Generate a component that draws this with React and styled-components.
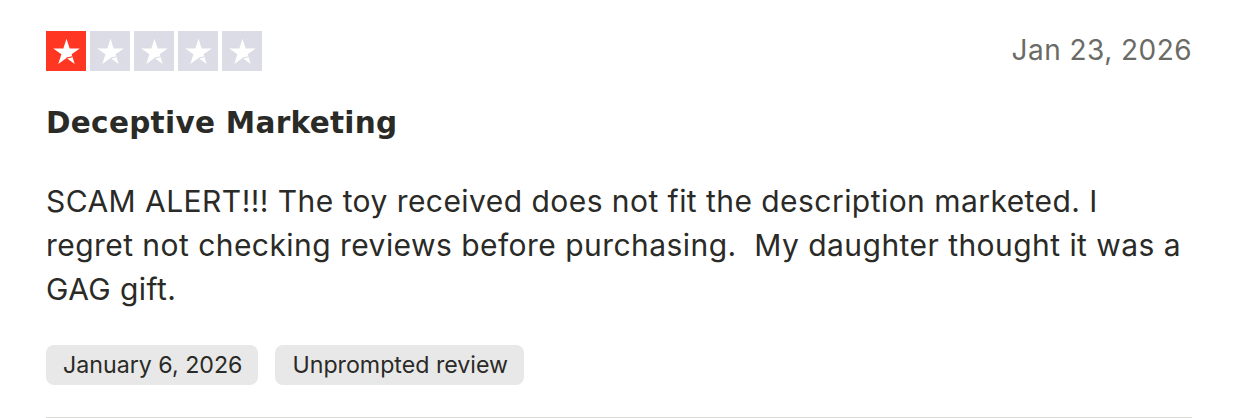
import styled, { createGlobalStyle } from "styled-components";

const GlobalStyle = createGlobalStyle`
  body {
    margin: 0;
    background: #ffffff;
    font-family: Inter, "Noto Sans", sans-serif;
    color: #2a2a27;
  }
`;

const Card = styled.article`
  padding: 31px 50px 0 46px;
  display: flex;
  flex-direction: column;
`;

const TopRow = styled.div`
  display: flex;
  justify-content: space-between;
  align-items: flex-start;
`;

const Stars = styled.div`
  display: flex;
  gap: 4px;
`;

const StarBox = styled.span`
  width: 40px;
  height: 40px;
  display: flex;
  align-items: center;
  justify-content: center;
  background: ${({ $color }) => $color};
`;

const PostDate = styled.time`
  font-size: 28px;
  line-height: 34px;
  color: #6b6b66;
  margin-top: 2px;
  letter-spacing: 0.45px;
`;

const Title = styled.h2`
  margin: 34px 0 0;
  font-family: "DejaVu Sans", Inter, sans-serif;
  font-size: 29.5px;
  line-height: 36px;
  font-weight: 700;
  letter-spacing: 0.3px;
`;

const Body = styled.p`
  margin: 38px 0 0;
  font-size: 30px;
  line-height: 44px;
  letter-spacing: 0.45px;
`;

const Chips = styled.div`
  display: flex;
  gap: 17px;
  margin-top: 34px;
`;

const Chip = styled.span`
  height: 40px;
  padding: 0 16px 0 17px;
  display: flex;
  align-items: center;
  background: #e8e8e8;
  border-radius: 8px;
  font-size: 23.2px;
`;

const Divider = styled.hr`
  margin: 32px 0 0;
  border: none;
  border-top: 1px solid #d8d8d4;
`;

// white star, with a thin notch in the box colour where the right leg folds
const Star = ({ bg }) => (
  <svg width="31" height="31" viewBox="0 0 24 24">
    <path
      d="M12 2.2l2.45 7.4h7.8l-6.3 4.55 2.4 7.45L12 17.1l-6.35 4.5 2.4-7.45L1.75 9.6h7.8z"
      fill="#ffffff"
    />
    <path d="M12 17.1l4.6-1.05" stroke={bg} strokeWidth="0.9" />
  </svg>
);

export default function App() {
  const rating = 1;
  return (
    <>
      <GlobalStyle />
      <Card>
        <TopRow>
          <Stars>
            {[0, 1, 2, 3, 4].map((i) => {
              const color = i < rating ? "#ff3722" : "#dcdce6";
              return (
                <StarBox key={i} $color={color}>
                  <Star bg={color} />
                </StarBox>
              );
            })}
          </Stars>
          <PostDate>Jan 23, 2026</PostDate>
        </TopRow>
        <Title>Deceptive Marketing</Title>
        <Body>
          SCAM ALERT!!! The toy received does not fit the description marketed. I
          regret not checking reviews before purchasing.&nbsp; My daughter thought it
          was a GAG gift.
        </Body>
        <Chips>
          <Chip>January 6, 2026</Chip>
          <Chip>Unprompted review</Chip>
        </Chips>
        <Divider />
      </Card>
    </>
  );
}
